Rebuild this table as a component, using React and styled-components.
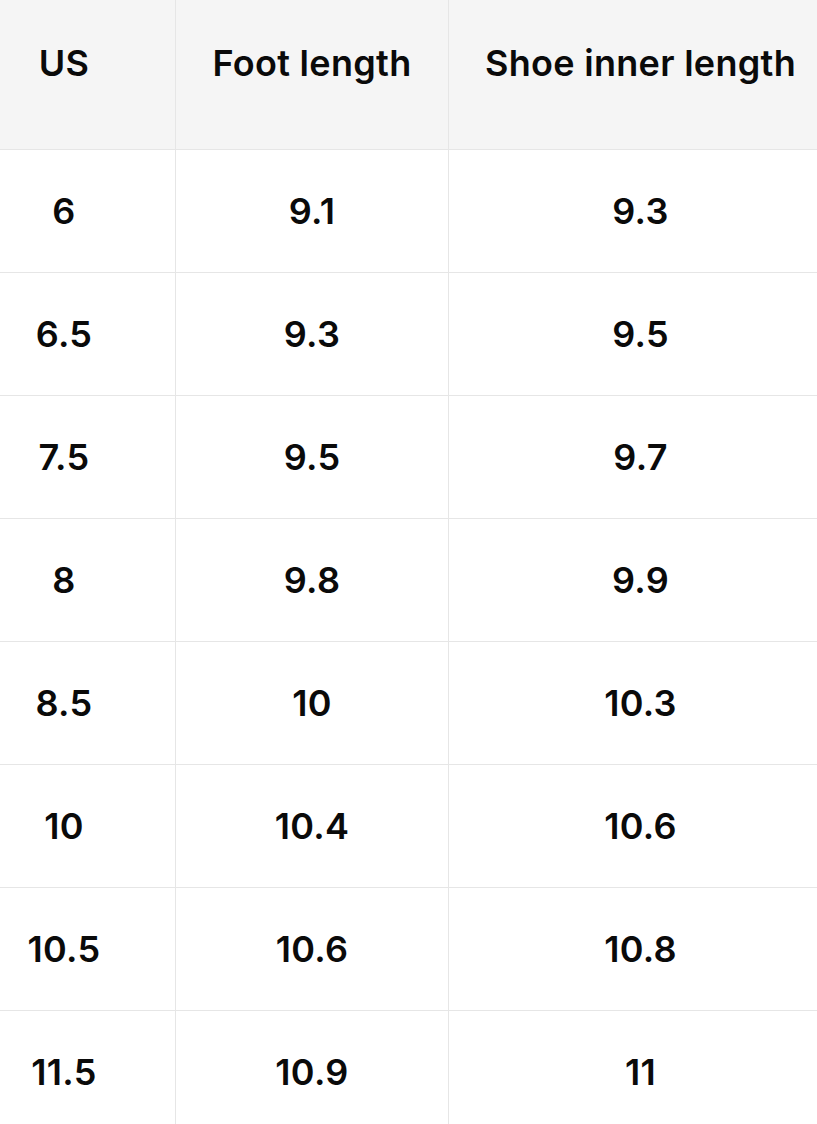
import React from 'react'
import styled, { createGlobalStyle } from 'styled-components'

const GlobalStyle = createGlobalStyle`
  html, body {
    margin: 0;
    padding: 0;
    background: #fff;
    font-family: Inter, "Noto Sans", "Liberation Sans", sans-serif;
  }
`

const border = '#e6e6e6'

const Table = styled.div`
  display: grid;
  grid-template-columns: 176px 273px 1fr;
  width: 817px;
  height: 1124px;
  overflow: hidden;
  align-content: start;
`

const Cell = styled.div`
  display: flex;
  align-items: center;
  justify-content: center;
  box-sizing: border-box;
  height: ${p => (p.$head ? 150 : 123)}px;
  padding-bottom: ${p => (p.$head ? 24 : 0)}px;
  padding-left: ${p => (p.$col === 2 ? 15 : 0)}px;
  padding-right: ${p => (p.$col === 0 ? 47 : 0)}px;
  background: ${p => (p.$head ? '#f5f5f5' : '#fff')};
  border-bottom: 1px solid ${border};
  border-right: ${p => (p.$col === 2 ? 'none' : `1px solid ${border}`)};
  color: #0a0a0a;
  font-size: 36px;
  font-weight: 600;
  letter-spacing: 0.3px;
  white-space: nowrap;
`

const headers = ['US', 'Foot length', 'Shoe inner length']

const rows = [
  ['6', '9.1', '9.3'],
  ['6.5', '9.3', '9.5'],
  ['7.5', '9.5', '9.7'],
  ['8', '9.8', '9.9'],
  ['8.5', '10', '10.3'],
  ['10', '10.4', '10.6'],
  ['10.5', '10.6', '10.8'],
  ['11.5', '10.9', '11'],
]

export default function App() {
  return (
    <>
      <GlobalStyle />
      <Table>
        {headers.map((h, i) => (
          <Cell $head $col={i} key={h}>{h}</Cell>
        ))}
        {rows.map((r, ri) =>
          r.map((v, ci) => (
            <Cell $col={ci} key={`${ri}-${ci}`}>{v}</Cell>
          ))
        )}
      </Table>
    </>
  )
}
